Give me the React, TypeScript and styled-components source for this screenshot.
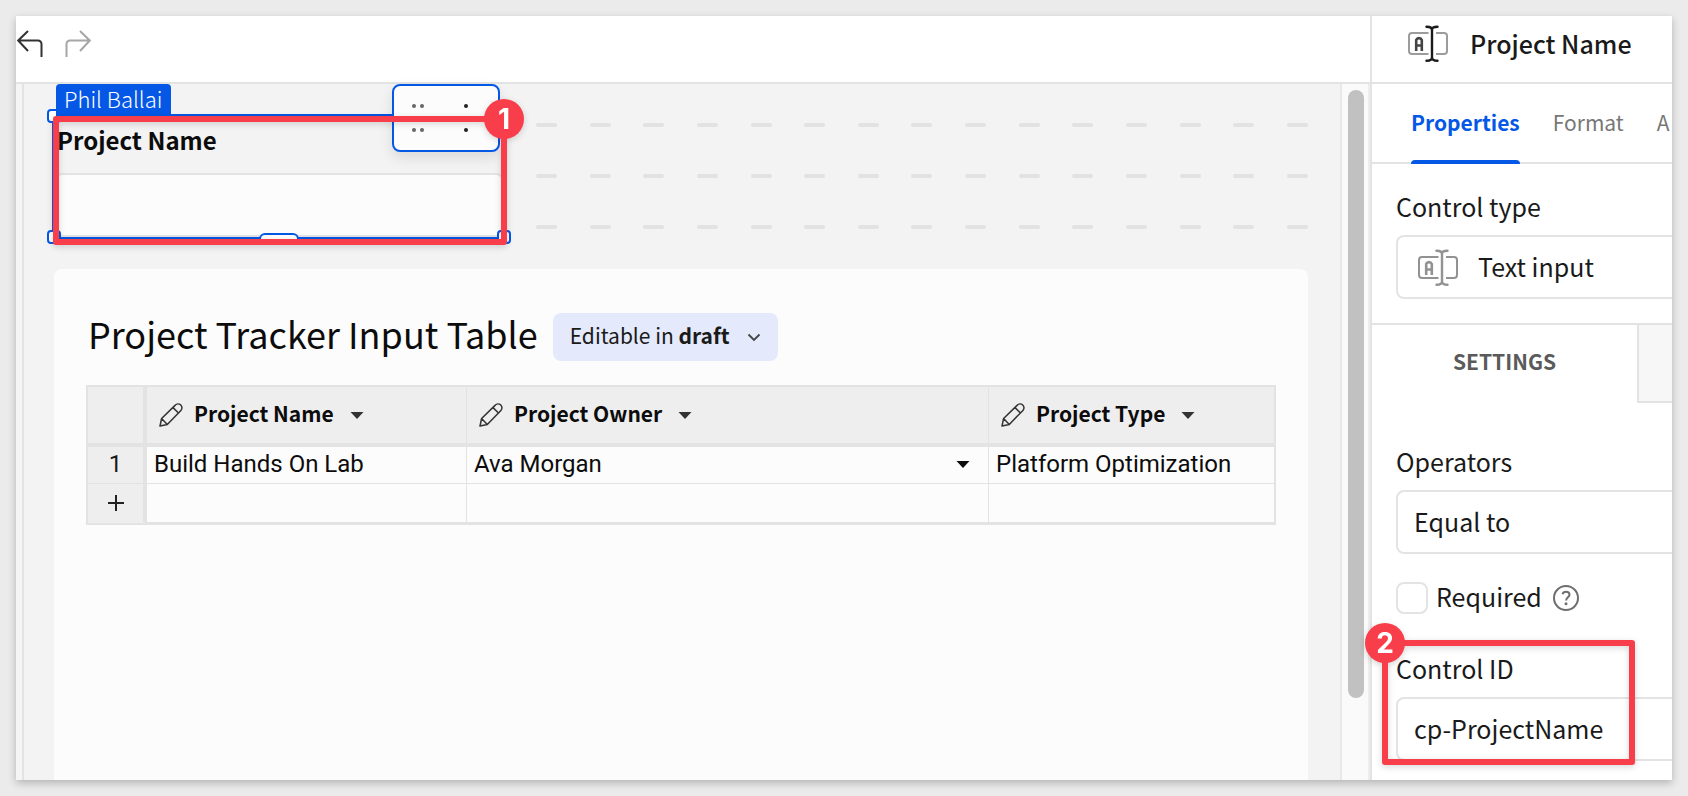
import React from "react";
import styled, { createGlobalStyle } from "styled-components";

const sans = `"Noto Sans CJK SC", "Noto Sans", sans-serif`;
const blue = "#0558e6";
const red = "#f83e4a";
const line = "#e3e3e3";

const GlobalStyle = createGlobalStyle`
  *, *::before, *::after { box-sizing: border-box; }
  body { margin: 0; background: #ebebeb; font-family: ${sans}; color: #1a1a1a; }
  button, select, input { font: inherit; color: inherit; margin: 0; }
  button { border: 0; background: none; padding: 0; cursor: pointer; }
`;

const Page = styled.div`
  display: flex;
  min-height: 100vh;
  padding: 16px;
`;

const Window = styled.div`
  display: flex;
  flex: 1;
  min-width: 0;
  overflow: hidden;
  background: #fff;
  box-shadow: 0 3px 8px rgba(0, 0, 0, 0.24);
`;

const Editor = styled.main`
  display: flex;
  flex-direction: column;
  flex: 1;
  min-width: 0;
`;

const Toolbar = styled.header`
  display: flex;
  align-items: flex-start;
  gap: 22px;
  height: 68px;
  padding: 14px 0 0 1px;
  border-bottom: 2px solid ${line};
`;

const Workspace = styled.div`
  display: flex;
  flex: 1;
`;

const Gutter = styled.div`
  width: 8px;
  background: #f5f5f5;
  border-right: 2px solid ${line};
`;

const Canvas = styled.div`
  display: flex;
  flex-direction: column;
  gap: 32px;
  flex: 1;
  min-width: 0;
  padding: 32px 32px 0 30px;
  background: #f3f3f3;
`;

const ScrollTrack = styled.div`
  display: flex;
  width: 30px;
  padding: 6px 4px 82px 6px;
  background: #fafafa;
  border-left: 2px solid #e8e8e8;
  border-right: 2px solid #ededed;
`;

const ScrollThumb = styled.div`
  width: 16px;
  border-radius: 8px;
  background: #c1c1c1;
`;

const TopRow = styled.div`
  display: grid;
  grid-template-columns: 450px 1fr;
  column-gap: 32px;
`;

const DashGrid = styled.div`
  display: flex;
  flex-direction: column;
  gap: 47px;
  padding-top: 7px;
`;

const DashRow = styled.div`
  display: flex;
  justify-content: space-between;
`;

const Dash = styled.span`
  width: 21px;
  height: 4px;
  border-radius: 2px;
  background: #e2e2e2;
`;

const Control = styled.div`
  position: relative;
  display: flex;
  flex-direction: column;
`;

const ControlLabel = styled.label`
  padding: 0 3px;
  height: 57px;
  font-size: 24px;
  line-height: 48px;
  font-weight: 700;
  color: #0c0c0c;
`;

const ControlInput = styled.input`
  width: 100%;
  height: 64px;
  padding: 0 16px;
  border: 2px solid ${line};
  border-radius: 8px;
  background: #fcfcfc;
  outline: none;
`;

const SelectionFrame = styled.div`
  position: absolute;
  inset: -2px;
  border: 2px solid ${blue};
  pointer-events: none;
`;

const Handle = styled.span<{ $v: "top" | "bottom"; $h: "left" | "right" }>`
  position: absolute;
  ${(p) => p.$v}: -7px;
  ${(p) => p.$h}: -7px;
  width: 14px;
  height: 14px;
  border: 2px solid ${blue};
  border-radius: 4px;
  background: #fff;
`;

const EdgeHandle = styled.span`
  position: absolute;
  left: calc(50% - 20px);
  bottom: -8px;
  width: 40px;
  height: 12px;
  border: 2px solid ${blue};
  border-radius: 6px;
  background: #fff;
`;

const UserTag = styled.span`
  position: absolute;
  left: 2px;
  bottom: 100%;
  padding: 0 9px 4px 8px;
  border-radius: 4px 4px 0 0;
  background: ${blue};
  color: #fff;
  font-size: 22px;
  line-height: 28px;
  font-weight: 300;
  white-space: nowrap;
`;

const FloatingTools = styled.div`
  position: absolute;
  right: 4px;
  top: -32px;
  display: flex;
  justify-content: space-between;
  align-items: center;
  width: 108px;
  height: 68px;
  padding: 0 30px 0 18px;
  border: 2px solid ${blue};
  border-radius: 8px;
  background: #fcfcfc;
  box-shadow: 0 6px 14px rgba(0, 0, 0, 0.1);
`;

const ToolButton = styled.button`
  display: flex;
`;

const Callout = styled.div<{ $inset: string }>`
  position: absolute;
  inset: ${(p) => p.$inset};
  border: 6px solid ${red};
  border-radius: 3px;
  filter: drop-shadow(0 2px 3px rgba(0, 0, 0, 0.16));
  pointer-events: none;
`;

const CalloutBadge = styled.span<{ $side: "left" | "right" }>`
  position: absolute;
  top: -23px;
  ${(p) => p.$side}: -23px;
  width: 40px;
  height: 40px;
  border-radius: 50%;
  background: ${red};
  color: #fff;
  font-family: Inter, sans-serif;
  font-size: 28px;
  line-height: 40px;
  font-weight: 700;
  text-align: center;
`;

const Card = styled.section`
  flex: 1;
  padding: 44px 32px 32px;
  border-radius: 8px 8px 0 0;
  background: #fcfcfc;
`;

const CardHead = styled.div`
  display: flex;
  align-items: center;
  gap: 15px;
  height: 48px;
  margin-bottom: 24px;
  padding-left: 2px;
`;

const CardTitle = styled.h1`
  margin: 0;
  padding-bottom: 8px;
  font-size: 36px;
  line-height: 48px;
  font-weight: 400;
  color: #0c0c0c;
  white-space: nowrap;
`;

const DraftButton = styled.button`
  display: flex;
  align-items: center;
  gap: 17px;
  height: 48px;
  padding: 0 17px;
  border-radius: 8px;
  background: #e4eafb;
  font-size: 21px;
  line-height: 32px;
  white-space: nowrap;

  span { padding-bottom: 4px; }
  strong { font-weight: 700; }
`;

const Table = styled.table`
  width: 100%;
  table-layout: fixed;
  border: 2px solid ${line};
  border-collapse: separate;
  border-spacing: 0;
`;

const HeadCell = styled.th`
  height: 60px;
  padding: 0 10px 0 12px;
  border-right: 1px solid ${line};
  border-bottom: 4px solid ${line};
  background: #eee;
  font-size: 21px;
  line-height: 32px;
  font-weight: 700;
  color: #0c0c0c;
  text-align: left;
  &:last-child { border-right: 0; }
`;

const HeadInner = styled.div`
  display: flex;
  align-items: center;

  span { padding: 0 16px 4px 11px; }
  button { display: flex; }
`;

const CornerCell = styled(HeadCell)`
  border-right: 4px solid ${line};
`;

const IndexCell = styled.th`
  height: 37px;
  padding: 0 0 2px;
  border-right: 4px solid ${line};
  border-bottom: 1px solid ${line};
  background: #eee;
  font-family: Roboto, sans-serif;
  font-size: 24px;
  line-height: 32px;
  font-weight: 400;
  text-align: center;
  tr:last-child > & { border-bottom-color: #eee; height: 39px; padding-bottom: 4px; }
  button { display: inline-flex; vertical-align: middle; }
`;

const Cell = styled.td`
  padding: 0 18px 2px 7px;
  border-right: 1px solid ${line};
  border-bottom: 1px solid ${line};
  font-family: Roboto, sans-serif;
  font-size: 24px;
  line-height: 32px;
  color: #0c0c0c;
  white-space: nowrap;
  &:last-child { border-right: 0; }
`;

const CellInner = styled.div`
  display: flex;
  align-items: center;
  justify-content: space-between;
`;

const Panel = styled.aside`
  display: flex;
  flex-direction: column;
  width: 302px;
  border-left: 2px solid ${line};
  background: #fff;
`;

const PanelHead = styled.div`
  display: flex;
  align-items: flex-start;
  gap: 22px;
  height: 68px;
  padding: 9px 0 0 36px;
  border-bottom: 2px solid ${line};
`;

const PanelTitle = styled.h2`
  margin: 0;
  font-size: 25px;
  line-height: 36px;
  font-weight: 500;
  white-space: nowrap;
`;

const Tabs = styled.nav`
  display: flex;
  gap: 33px;
  height: 80px;
  padding-left: 39px;
  border-bottom: 2px solid ${line};
`;

const Tab = styled.button<{ $active?: boolean }>`
  position: relative;
  height: 80px;
  padding-bottom: 4px;
  font-size: 21px;
  line-height: 32px;
  font-weight: ${(p) => (p.$active ? 700 : 400)};
  color: ${(p) => (p.$active ? blue : "#777")};

  &::after {
    content: "";
    position: absolute;
    left: 0;
    right: 0;
    bottom: 0;
    height: 4px;
    border-radius: 4px 4px 0 0;
    background: ${(p) => (p.$active ? blue : "transparent")};
  }
`;

const Section = styled.div<{ $pad: string }>`
  display: flex;
  flex-direction: column;
  gap: 28px;
  padding: ${(p) => p.$pad};
`;

const Field = styled.div`
  position: relative;
  display: flex;
  flex-direction: column;
  gap: 11px;
`;

const FieldLabel = styled.label`
  font-size: 25px;
  line-height: 36px;
`;

const FieldBox = styled.div<{ $pad: number }>`
  display: flex;
  align-items: center;
  gap: 20px;
  height: 64px;
  margin-right: -24px;
  padding-left: ${(p) => p.$pad}px;
  border: 2px solid ${line};
  border-radius: 8px;

  select,
  input {
    flex: 1;
    min-width: 0;
    height: 60px;
    padding: 0 0 2px;
    border: 0;
    outline: none;
    background: none;
    appearance: none;
    font-size: 25px;
    line-height: 36px;
  }
`;

const SettingsTabs = styled.div`
  display: grid;
  grid-template-columns: 1fr 35px;
  height: 80px;
  border-top: 2px solid ${line};
`;

const SettingsTab = styled.button`
  padding-bottom: 6px;
  font-size: 21px;
  line-height: 32px;
  font-weight: 700;
  color: #5a5a5a;
  text-align: center;
`;

const NextTab = styled.button`
  border-left: 2px solid ${line};
  border-bottom: 2px solid ${line};
  background: #f7f7f7;
`;

const CheckRow = styled.div`
  display: flex;
  align-items: center;
  height: 32px;
  margin-bottom: 8px;

  input {
    width: 32px;
    height: 32px;
    border: 2px solid ${line};
    border-radius: 8px;
    background: #fff;
    appearance: none;
  }
  label {
    padding: 0 11px 4px 8px;
    font-size: 25px;
    line-height: 32px;
  }
  button { display: flex; }
`;

const UndoIcon = ({ color, flip }: { color: string; flip?: boolean }) => (
  <svg width="26" height="28" viewBox="0 0 26 28" fill="none" stroke={color} strokeWidth="2">
    <g transform={flip ? "translate(26 0) scale(-1 1)" : undefined}>
      <path d="M11 1 1.200 10.500 11 21M1.500 10.500H21a3.500 3.500 0 0 1 3.500 3.500V27" />
    </g>
  </svg>
);

const TextInputIcon = ({ box, letter, cursor }: { box: string; letter: string; cursor: string }) => (
  <svg width="40" height="37" viewBox="0 0 40 37" fill="none" strokeWidth="2">
    <path d="M20.500 8H4a3 3 0 0 0-3 3v15a3 3 0 0 0 3 3h16.500M28 8h8a3 3 0 0 1 3 3v15a3 3 0 0 1-3 3h-8" stroke={box} />
    <path d="M8.200 26V15a3 3 0 0 1 5.600 0v11M8.200 20.500h5.600" stroke={letter} strokeWidth="2.600" />
    <path d="M18.500 1.800c3.500 0 5.500.4 5.500 3.200 0-2.800 2-3.200 5.500-3.200M18.500 35.800c3.500 0 5.500-.4 5.500-3.200 0 2.800 2 3.200 5.500 3.200M24 4v30" stroke={cursor} strokeWidth="2.400" strokeLinecap="round" />
  </svg>
);

const PencilIcon = () => (
  <svg width="24" height="24" viewBox="0 0 24 24" fill="none" stroke="#333" strokeWidth="1.500" strokeLinejoin="round">
    <path d="M1 23l1.600-7.500L16.300 2.100a3.800 3.800 0 0 1 5.600 5.300L8.300 21.400zM2.600 15.500l5.700 5.900M14 4.600l5.500 5.400" />
  </svg>
);

const Caret = ({ color }: { color: string }) => (
  <svg width="14" height="7" viewBox="0 0 14 7">
    <path d="M0.500 0h13L7 7z" fill={color} />
  </svg>
);

const Dots = ({ double }: { double?: boolean }) => (
  <svg width={double ? 12 : 4} height="28" viewBox={`0 0 ${double ? 12 : 4} 28`} fill={double ? "#666" : "#222"}>
    <circle cx="2" cy="2" r="2" />
    <circle cx="2" cy="26" r="2" />
    {double && <circle cx="10" cy="2" r="2" />}
    {double && <circle cx="10" cy="26" r="2" />}
  </svg>
);

const columns = ["Project Name", "Project Owner", "Project Type"];

export default function App() {
  return (
    <Page>
      <GlobalStyle />
      <Window>
        <Editor>
          <Toolbar>
            <ToolButton aria-label="Undo"><UndoIcon color="#333" /></ToolButton>
            <ToolButton aria-label="Redo"><UndoIcon color="#a6a6a6" flip /></ToolButton>
          </Toolbar>
          <Workspace>
            <Gutter />
            <Canvas>
              <TopRow>
                <Control>
                  <ControlLabel htmlFor="project-name">Project Name</ControlLabel>
                  <ControlInput id="project-name" type="text" />
                  <SelectionFrame>
                    <Handle $v="top" $h="left" />
                    <Handle $v="bottom" $h="left" />
                    <Handle $v="bottom" $h="right" />
                    <EdgeHandle />
                  </SelectionFrame>
                  <UserTag>Phil Ballai</UserTag>
                  <FloatingTools>
                    <ToolButton aria-label="Drag"><Dots double /></ToolButton>
                    <ToolButton aria-label="More"><Dots /></ToolButton>
                  </FloatingTools>
                  <Callout $inset="0 -3px -8px -1px">
                    <CalloutBadge $side="right">1</CalloutBadge>
                  </Callout>
                </Control>
                <DashGrid>
                  {[0, 1, 2].map((r) => (
                    <DashRow key={r}>
                      {Array.from({ length: 15 }, (_, i) => <Dash key={i} />)}
                    </DashRow>
                  ))}
                </DashGrid>
              </TopRow>
              <Card>
                <CardHead>
                  <CardTitle>Project Tracker Input Table</CardTitle>
                  <DraftButton>
                    <span>Editable in <strong>draft</strong></span>
                    <svg width="14" height="9" viewBox="0 0 14 9" fill="none" stroke="#444" strokeWidth="1.800">
                      <path d="M1.500 1.500 7 7l5.500-5.500" />
                    </svg>
                  </DraftButton>
                </CardHead>
                <Table>
                  <colgroup>
                    <col style={{ width: 59 }} />
                    <col style={{ width: 320 }} />
                    <col style={{ width: 522 }} />
                    <col />
                  </colgroup>
                  <thead>
                    <tr>
                      <CornerCell as="td" />
                      {columns.map((name) => (
                        <HeadCell key={name} scope="col">
                          <HeadInner>
                            <PencilIcon />
                            <span>{name}</span>
                            <button aria-label={`${name} menu`}><Caret color="#333" /></button>
                          </HeadInner>
                        </HeadCell>
                      ))}
                    </tr>
                  </thead>
                  <tbody>
                    <tr>
                      <IndexCell scope="row">1</IndexCell>
                      <Cell>Build Hands On Lab</Cell>
                      <Cell>
                        <CellInner>
                          Ava Morgan
                          <ToolButton aria-label="Choose owner"><Caret color="#0c0c0c" /></ToolButton>
                        </CellInner>
                      </Cell>
                      <Cell>Platform Optimization</Cell>
                    </tr>
                    <tr>
                      <IndexCell>
                        <button aria-label="Add row">
                          <svg width="16" height="16" viewBox="0 0 16 16" stroke="#222" strokeWidth="2">
                            <path d="M8 0v16M0 8h16" />
                          </svg>
                        </button>
                      </IndexCell>
                      <Cell />
                      <Cell />
                      <Cell />
                    </tr>
                  </tbody>
                </Table>
              </Card>
            </Canvas>
            <ScrollTrack><ScrollThumb /></ScrollTrack>
          </Workspace>
        </Editor>
        <Panel>
          <PanelHead>
            <TextInputIcon box="#9c9c9c" letter="#444" cursor="#1a1a1a" />
            <PanelTitle>Project Name</PanelTitle>
          </PanelHead>
          <Tabs>
            <Tab $active>Properties</Tab>
            <Tab>Format</Tab>
            <Tab>A</Tab>
          </Tabs>
          <Section $pad="24px 0 24px 24px">
            <Field>
              <FieldLabel htmlFor="control-type">Control type</FieldLabel>
              <FieldBox $pad={20}>
                <TextInputIcon box="#929292" letter="#929292" cursor="#929292" />
                <select id="control-type"><option>Text input</option></select>
              </FieldBox>
            </Field>
          </Section>
          <SettingsTabs>
            <SettingsTab>SETTINGS</SettingsTab>
            <NextTab aria-label="Next settings tab" />
          </SettingsTabs>
          <Section $pad="40px 0 19px 24px">
            <Field>
              <FieldLabel htmlFor="operators">Operators</FieldLabel>
              <FieldBox $pad={16}>
                <select id="operators"><option>Equal to</option></select>
              </FieldBox>
            </Field>
            <CheckRow>
              <input id="required" type="checkbox" />
              <label htmlFor="required">Required</label>
              <button aria-label="Help">
                <svg width="26" height="26" viewBox="0 0 26 26" fill="none" stroke="#6e6e6e" strokeWidth="2">
                  <circle cx="13" cy="13" r="12" />
                  <path d="M9.600 9.200C10 7.600 11.300 6.800 13 6.800c2 0 3.500 1.100 3.500 2.900 0 2.600-3.400 2.700-3.400 5.800" />
                  <circle cx="13" cy="18.700" r="1.500" fill="#6e6e6e" stroke="none" />
                </svg>
              </button>
            </CheckRow>
            <Field>
              <FieldLabel htmlFor="control-id">Control ID</FieldLabel>
              <FieldBox $pad={16}>
                <input id="control-id" type="text" defaultValue="cp-ProjectName" />
              </FieldBox>
              <Callout $inset="-10px 37px -4px -14px">
                <CalloutBadge $side="left">2</CalloutBadge>
              </Callout>
            </Field>
          </Section>
        </Panel>
      </Window>
    </Page>
  );
}
